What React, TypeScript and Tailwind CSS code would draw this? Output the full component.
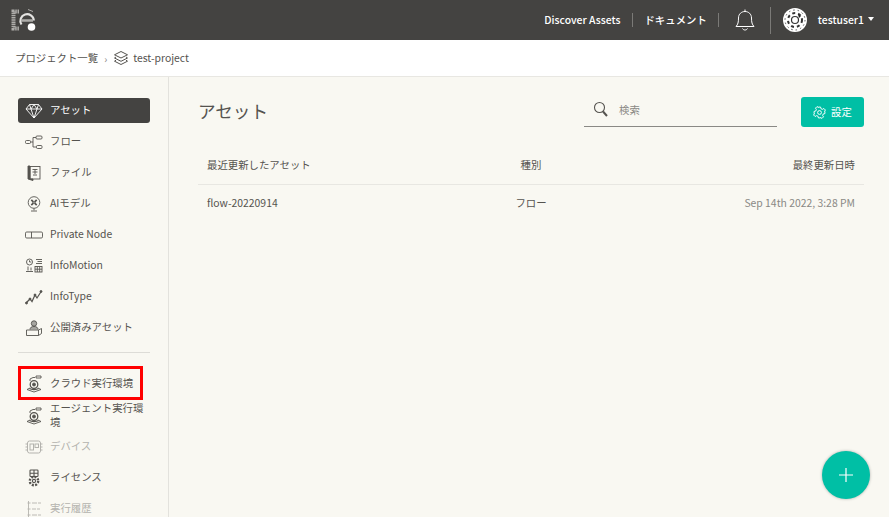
import React from "react";

const font = "font-['Noto_Sans_CJK_JP','Noto_Sans',sans-serif]";

// Sidebar icons
const icon = { width: 18, height: 18, viewBox: "0 0 18 18", fill: "none", stroke: "currentColor", strokeWidth: 0.9 };

const Gem = () => (
  <svg {...icon}>
    <path d="M4.500 2.500h9l3.500 4.500L9 16 1 7zM1 7h16M6 7l3 9 3-9M4.500 2.500L6 7l3-4.500L12 7l1.500-4.500" />
  </svg>
);
const FlowIcon = () => (
  <svg {...icon}>
    <rect x="0.500" y="7.500" width="5" height="3" rx="1" />
    <rect x="11" y="3" width="6" height="3" rx="1" />
    <rect x="11.500" y="12.500" width="5.500" height="3" rx="1" />
    <path d="M5.500 9H8M8 4.500V14M8 4.500h3M8 14h3.500" />
  </svg>
);
const FileIcon = () => (
  <svg {...icon}>
    <rect x="5" y="2.500" width="10" height="12.500" />
    <path d="M3 2h2v13h3v1.500L3 15z" fill="currentColor" />
    <path d="M7.500 5.500h5M7.500 8h5M10 5.500V10M8 11h4" />
  </svg>
);
const FanIcon = () => (
  <svg {...icon}>
    <circle cx="9" cy="7.500" r="5.800" />
    <circle cx="9" cy="7.500" r="0.900" />
    <path d="M6.300 4.800l2 2M11.700 4.800l-2 2M6.300 10.200l2-2M11.700 10.200l-2-2" strokeWidth="1.700" />
    <path d="M9 13.300v2M6 16h6" />
  </svg>
);
const NodeIcon = () => (
  <svg {...icon}>
    <rect x="0.500" y="6" width="17" height="6" rx="1.200" />
    <path d="M6.500 6v6" />
  </svg>
);
const MotionIcon = () => (
  <svg {...icon}>
    <circle cx="4.500" cy="5" r="3" />
    <path d="M4.500 3.300V5h1.700" />
    <path d="M11 2.500h6M12.500 4.500H17M11 6.500h6M3 9.500v4M6 10.500v3M1 14.500h7" />
    <rect x="10" y="9.500" width="7" height="5.500" />
    <path d="M12.300 9.500V15M14.700 9.500V15M10 12.200h7" />
  </svg>
);
const TypeIcon = () => (
  <svg {...icon}>
    <path d="M1 15l4-4 2 2.500L10 7l2 3 4.500-7" strokeWidth="1.200" />
    <circle cx="1.500" cy="15" r="1" fill="currentColor" />
    <circle cx="5" cy="11" r="1" fill="currentColor" />
    <circle cx="10" cy="7" r="1" fill="currentColor" />
    <circle cx="16" cy="3.500" r="1" fill="currentColor" />
  </svg>
);
const PublicIcon = () => (
  <svg {...icon}>
    <circle cx="9" cy="4.500" r="2.700" stroke="currentColor" fill="currentColor" fillOpacity="0.5" />
    <path d="M5 10.500c0-2 1.500-3 4-3s4 1 4 3" fill="currentColor" fillOpacity="0.5" />
    <path d="M1.500 11h12v5.500h-12zM13.500 11l3-1.500v5l-3 2" />
  </svg>
);
const RunIcon = () => (
  <svg {...icon}>
    <path d="M5 6V4l3-1.500h2M11 1h5v2h-5z" />
    <circle cx="9" cy="9.500" r="3.800" strokeWidth="1.300" />
    <circle cx="9" cy="9.500" r="1.500" fill="currentColor" />
    <path d="M5 13l-3 1.500L9 17l7-2.500-3-1.500" />
    <path d="M4.500 13.500c2 1.300 7 1.300 9 0" strokeWidth="1.300" />
  </svg>
);
const DeviceIcon = () => (
  <svg {...icon} strokeWidth="1">
    <rect x="2.500" y="3" width="13" height="12" rx="2" />
    <rect x="5" y="6" width="3.500" height="6" />
    <rect x="10" y="6" width="3.500" height="3.500" />
    <path d="M0.500 6h2M0.500 9h2M0.500 12h2M15.500 6h2M15.500 9h2M15.500 12h2" />
  </svg>
);
const LicenseIcon = () => (
  <svg {...icon} strokeWidth="1.100">
    <rect x="5" y="1" width="8" height="6.500" rx="0.800" />
    <path d="M5 4.200h8M9 1v6.500" />
    <circle cx="9" cy="12" r="1.600" />
    <circle cx="9" cy="12" r="4.200" strokeWidth="2.400" strokeDasharray="2 1.300" />
  </svg>
);
const HistoryIcon = () => (
  <svg {...icon}>
    <path d="M3.500 1v16M2.500 3h3M2.500 9h3M2.500 15h3M7 3h5M13 3h3M7 9h4M12 9h3M7 15h5M13 15h3" />
  </svg>
);

const Layers = () => (
  <svg width="16" height="16" viewBox="0 0 16 16" fill="none" stroke="#55534f" strokeWidth="1">
    <path d="M8 1.500l6.500 3.300L8 8 1.500 4.800zM3 7L1.500 8 8 11.300 14.500 8 13 7M3 10.200l-1.500 1L8 14.500l6.500-3.300-1.500-1" />
  </svg>
);

const Logo = () => (
  <svg width="26" height="24" viewBox="0 0 26 24" fill="none">
    <path d="M8 3.500H2.500v17H8" stroke="#aeadaa" strokeWidth="4" strokeDasharray="1.500 0.700" />
    <path d="M10.500 16.500a6.700 6.700 0 1 1 12.300-4" stroke="#e4e3e1" strokeWidth="2.200" />
    <path d="M10 12.500h12" stroke="#aeadaa" strokeWidth="2.500" />
    <path d="M17 1.500l5 2" stroke="#aeadaa" strokeWidth="1" />
    <circle cx="20.500" cy="19" r="3.800" fill="#fff" />
  </svg>
);

const Avatar = () => (
  <svg width="24" height="24" viewBox="0 0 24 24" fill="none">
    <circle cx="12" cy="12" r="12" fill="#fff" />
    <circle cx="12" cy="12" r="3.500" stroke="#333" strokeWidth="1.200" />
    <circle cx="12" cy="12" r="7" stroke="#333" strokeWidth="2" strokeDasharray="3 3" />
    <circle cx="12" cy="12" r="10" stroke="#555" strokeWidth="1" strokeDasharray="1.500 3" />
    <path d="M15 6l3 2-2 2z" fill="#222" />
  </svg>
);

interface NavItem {
  label: string;
  Icon: React.FC;
  active?: boolean;
  disabled?: boolean;
}

const topItems: NavItem[] = [
  { label: "アセット", Icon: Gem, active: true },
  { label: "フロー", Icon: FlowIcon },
  { label: "ファイル", Icon: FileIcon },
  { label: "AIモデル", Icon: FanIcon },
  { label: "Private Node", Icon: NodeIcon },
  { label: "InfoMotion", Icon: MotionIcon },
  { label: "InfoType", Icon: TypeIcon },
  { label: "公開済みアセット", Icon: PublicIcon },
];

const NavRow = ({ item, className = "" }: { item: NavItem; className?: string }) => {
  const { Icon } = item;
  const color = item.active
    ? "bg-[#444341] text-white rounded-[3px]"
    : item.disabled
      ? "text-[#b4b3ae]"
      : "text-[#55534f]";
  return (
    <div className={`flex h-[25px] items-center pl-[3px] pr-[3px] ${color} ${className}`}>
      <span className="flex w-[26px] shrink-0 justify-center">
        <Icon />
      </span>
      <span className="ml-[3px] pb-[2px] text-[10.4px] leading-[14px]">{item.label}</span>
    </div>
  );
};

export default function App() {
  return (
    <div className={`flex h-[517px] w-[889px] flex-col overflow-hidden bg-[#f9f8f2] text-[#55534f] ${font}`}>
      {/* ヘッダー */}
      <header className="flex h-10 shrink-0 items-center justify-between bg-[#444341] pl-[11px] pr-[15px] text-white">
        <Logo />
        <div className="flex items-center text-[10.4px] font-medium">
          <span>Discover Assets</span>
          <span className="ml-[12px] mr-[11px] h-[14px] border-l border-[#7b7a77]" />
          <span>ドキュメント</span>
          <span className="ml-[11px] mr-[11px] h-[14px] border-l border-[#7b7a77]" />
          <svg width="22" height="24" viewBox="0 0 22 24" fill="none" stroke="#fff" strokeWidth="1" className="ml-[4px]">
            <path d="M2 18.500c2-2 2.500-4.500 2.500-8.500 0-4 3-6.500 6.500-6.500s6.500 2.500 6.500 6.500c0 4 .5 6.500 2.500 8.500z" />
            <path d="M11 1.500v2M8.500 20.500c.5 1 1.500 1.500 2.500 1.500s2-.5 2.500-1.500" />
          </svg>
          <span className="ml-[14px] h-[27px] border-l border-[#7b7a77]" />
          <span className="ml-3">
            <Avatar />
          </span>
          <span className="ml-[11px]">testuser1</span>
          <span className="ml-[4px] mb-[2px] h-0 w-0 border-x-[3px] border-t-[4px] border-x-transparent border-t-white" />
        </div>
      </header>

      {/* パンくず */}
      <div className="flex h-[37px] shrink-0 items-center border-b border-[#e8e7e2] bg-white pl-[15px] text-[10.4px]">
        <span>プロジェクト一覧</span>
        <span className="mx-[6px] text-[10px] text-[#8a8985]">›</span>
        <Layers />
        <span className="ml-[4px]">test-project</span>
      </div>

      <div className="flex min-h-0 flex-1">
        {/* サイドバー */}
        <aside className="w-[169px] shrink-0 border-r border-[#e3e2dd] px-[18px] pt-[21px]">
          <nav className="flex flex-col gap-[6px]">
            {topItems.map((item) => (
              <NavRow key={item.label} item={item} />
            ))}
          </nav>
          <div className="mt-[12px] mb-[18px] border-t border-[#dddcd7]" />
          <nav className="relative flex flex-col gap-[6px]">
            <NavRow item={{ label: "クラウド実行環境", Icon: RunIcon }} />
            <div className="absolute left-0 top-[-5px] h-[34px] w-[125px] border-[3px] border-[#ff0000]" />
            <NavRow item={{ label: "エージェント実行環境", Icon: RunIcon }} className="mt-[1px]" />
            <NavRow item={{ label: "デバイス", Icon: DeviceIcon, disabled: true }} />
            <NavRow item={{ label: "ライセンス", Icon: LicenseIcon }} />
            <NavRow item={{ label: "実行履歴", Icon: HistoryIcon, disabled: true }} />
          </nav>
        </aside>

        {/* メイン */}
        <main className="relative min-w-0 flex-1 pl-[29px] pr-[25px] pt-[20px]">
          <div className="flex items-center justify-between">
            <h1 className="pb-[2px] text-[17.6px] font-normal">アセット</h1>
            <div className="flex items-center">
              <div className="flex h-[30px] w-[193px] items-center border-b border-[#8a8985] pb-[4px] pl-[9px] text-[10.4px] text-[#8a8985]">
                <svg width="16" height="18" viewBox="0 0 16 18" fill="none" stroke="#55534f" strokeWidth="1.100">
                  <circle cx="6.500" cy="6.500" r="5" />
                  <path d="M10 10.500l4 4.500" strokeWidth="2" />
                </svg>
                <span className="ml-[10px]">検索</span>
              </div>
              <button className="ml-[24px] flex h-[30px] w-[63px] items-center justify-center gap-[5px] rounded-[3px] bg-[#00bfa5] text-[10.4px] text-white">
                <svg width="13" height="13" viewBox="0 0 24 24" fill="none" stroke="#fff" strokeWidth="1.800">
                  <circle cx="12" cy="12" r="3.500" />
                  <path d="M10 2h4l.7 3 2.700 1.200 2.700-1.600 2.800 2.800-1.600 2.700L22 10v4l-3 .7-1.200 2.700 1.600 2.700-2.800 2.800-2.700-1.600L14 22h-4l-.7-3-2.700-1.200-2.700 1.600-2.800-2.800 1.600-2.700L2 14v-4l3-.7 1.200-2.700-1.600-2.700 2.800-2.800 2.700 1.600z" />
                </svg>
                設定
              </button>
            </div>
          </div>

          <table className="mt-[19px] w-full text-[10.4px]">
            <thead>
              <tr className="h-[38px] border-b border-[#e8e7e2]">
                <th className="w-[250px] pl-[9px] text-left font-normal">最近更新したアセット</th>
                <th className="w-[166px] text-center font-normal">種別</th>
                <th className="pr-[9px] text-right font-normal">最終更新日時</th>
              </tr>
            </thead>
            <tbody>
              <tr className="h-[38px]">
                <td className="pl-[9px]">flow-20220914</td>
                <td className="text-center">フロー</td>
                <td className="pr-[9px] text-right text-[#8a8985]">Sep 14th 2022, 3:28 PM</td>
              </tr>
            </tbody>
          </table>

          <button className="absolute bottom-[18px] right-[19px] flex h-12 w-12 items-center justify-center rounded-full bg-[#00bfa5] shadow-[0_0_3px_rgba(0,0,0,0.3)]">
            <svg width="14" height="14" viewBox="0 0 14 14" stroke="#fff" strokeWidth="1.200">
              <path d="M7 0v14M0 7h14" />
            </svg>
          </button>
        </main>
      </div>
    </div>
  );
}
